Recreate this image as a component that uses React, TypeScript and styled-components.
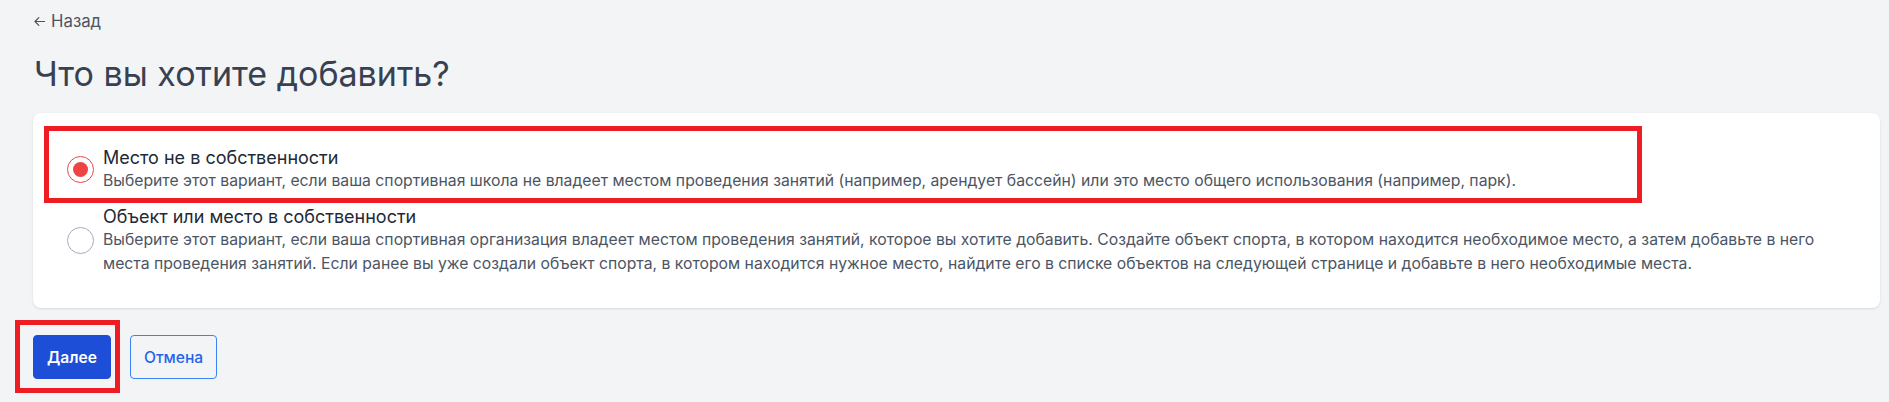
import React from "react";
import styled, { createGlobalStyle } from "styled-components";

const Global = createGlobalStyle`
  html, body { margin: 0; padding: 0; background: #f3f4f6; }
  body { font-family: Inter, "Noto Sans", sans-serif; -webkit-font-smoothing: antialiased; }
  * { box-sizing: border-box; }
`;

const Page = styled.div`
  padding: 9px 9px 20px 33px;
  display: flex;
  flex-direction: column;
`;

const BackLink = styled.a`
  display: inline-flex;
  align-items: center;
  gap: 6px;
  align-self: flex-start;
  margin-left: 1px;
  font-size: 16.8px;
  line-height: 24px;
  color: #4b5563;
  text-decoration: none;
  cursor: pointer;
`;

const Title = styled.h1`
  margin: 20px 0 0 1px;
  font-size: 34px;
  line-height: 42px;
  font-weight: 400;
  color: #374151;
`;

const Card = styled.div`
  margin-top: 18px;
  background: #ffffff;
  border-radius: 8px;
  box-shadow: 0 1px 3px rgba(0, 0, 0, 0.08), 0 1px 2px rgba(0, 0, 0, 0.04);
  padding: 33px 32px 32px 34px;
  display: flex;
  flex-direction: column;
  gap: 12px;
`;

const Option = styled.label`
  position: relative;
  display: flex;
  align-items: center;
  gap: 9px;
  cursor: pointer;
`;

const Radio = styled.span<{ $checked?: boolean }>`
  flex: none;
  width: 27px;
  height: 27px;
  border-radius: 50%;
  border: 1.5px solid ${(p) => (p.$checked ? "#ef4444" : "#a3acbd")};
  display: flex;
  align-items: center;
  justify-content: center;
  background: #fff;
  &::after {
    content: "";
    display: ${(p) => (p.$checked ? "block" : "none")};
    width: 15px;
    height: 15px;
    border-radius: 50%;
    background: #ef4444;
  }
`;

const OptionText = styled.div`
  display: flex;
  flex-direction: column;
`;

const OptionTitle = styled.div`
  font-size: 18px;
  line-height: 23px;
  color: #1f2937;
`;

const OptionDesc = styled.div`
  font-size: 15.75px;
  line-height: 24px;
  color: #4b5563;
`;

const Annotation = styled.span<{ $top: number; $left: number; $right: number; $bottom: number }>`
  position: absolute;
  top: ${(p) => p.$top}px;
  left: ${(p) => p.$left}px;
  right: ${(p) => p.$right}px;
  bottom: ${(p) => p.$bottom}px;
  border: 5px solid #ee1d23;
  pointer-events: none;
`;

const Actions = styled.div`
  margin-top: 27px;
  display: flex;
  gap: 19px;
`;

const Highlighted = styled.div`
  position: relative;
  display: flex;
`;

const Button = styled.button<{ $primary?: boolean }>`
  height: 44px;
  padding: 0 13px;
  border-radius: 4px;
  font-family: Inter, sans-serif;
  font-size: 15.6px;
  font-weight: ${(p) => (p.$primary ? 600 : 500)};
  border: 1px solid ${(p) => (p.$primary ? "#1d4ed8" : "#3b82f6")};
  background: ${(p) => (p.$primary ? "#1d4ed8" : "transparent")};
  color: ${(p) => (p.$primary ? "#ffffff" : "#2563eb")};
  cursor: pointer;
`;

const ArrowIcon = () => (
  <svg width="11" height="9" viewBox="0 0 11 9" fill="none">
    <path d="M10.5 4.5H1M4.8 0.7L1 4.5l3.8 3.8" stroke="#4b5563" strokeWidth="1.2" strokeLinecap="round" strokeLinejoin="round" />
  </svg>
);

export default function App() {
  return (
    <>
      <Global />
      <Page>
        <BackLink>
          <ArrowIcon />
          Назад
        </BackLink>
        <Title>Что вы хотите добавить?</Title>
        <Card>
          <Option>
            <Radio $checked />
            <OptionText>
              <OptionTitle>Место не в собственности</OptionTitle>
              <OptionDesc>
                Выберите этот вариант, если ваша спортивная школа не владеет местом проведения занятий (например,
                арендует бассейн) или это место общего использования (например, парк).
              </OptionDesc>
            </OptionText>
            <Annotation $top={-20} $left={-23} $right={206} $bottom={-10} />
          </Option>
          <Option>
            <Radio />
            <OptionText>
              <OptionTitle>Объект или место в собственности</OptionTitle>
              <OptionDesc>
                Выберите этот вариант, если ваша спортивная организация владеет местом проведения занятий, которое вы
                хотите добавить. Создайте объект спорта, в котором находится необходимое место, а затем добавьте в него
                места проведения занятий. Если ранее вы уже создали объект спорта, в котором находится нужное место,
                найдите его в списке объектов на следующей странице и добавьте в него необходимые места.
              </OptionDesc>
            </OptionText>
          </Option>
        </Card>
        <Actions>
          <Highlighted>
            <Button $primary>Далее</Button>
            <Annotation $top={-15} $left={-18} $right={-9} $bottom={-14} />
          </Highlighted>
          <Button>Отмена</Button>
        </Actions>
      </Page>
    </>
  );
}
